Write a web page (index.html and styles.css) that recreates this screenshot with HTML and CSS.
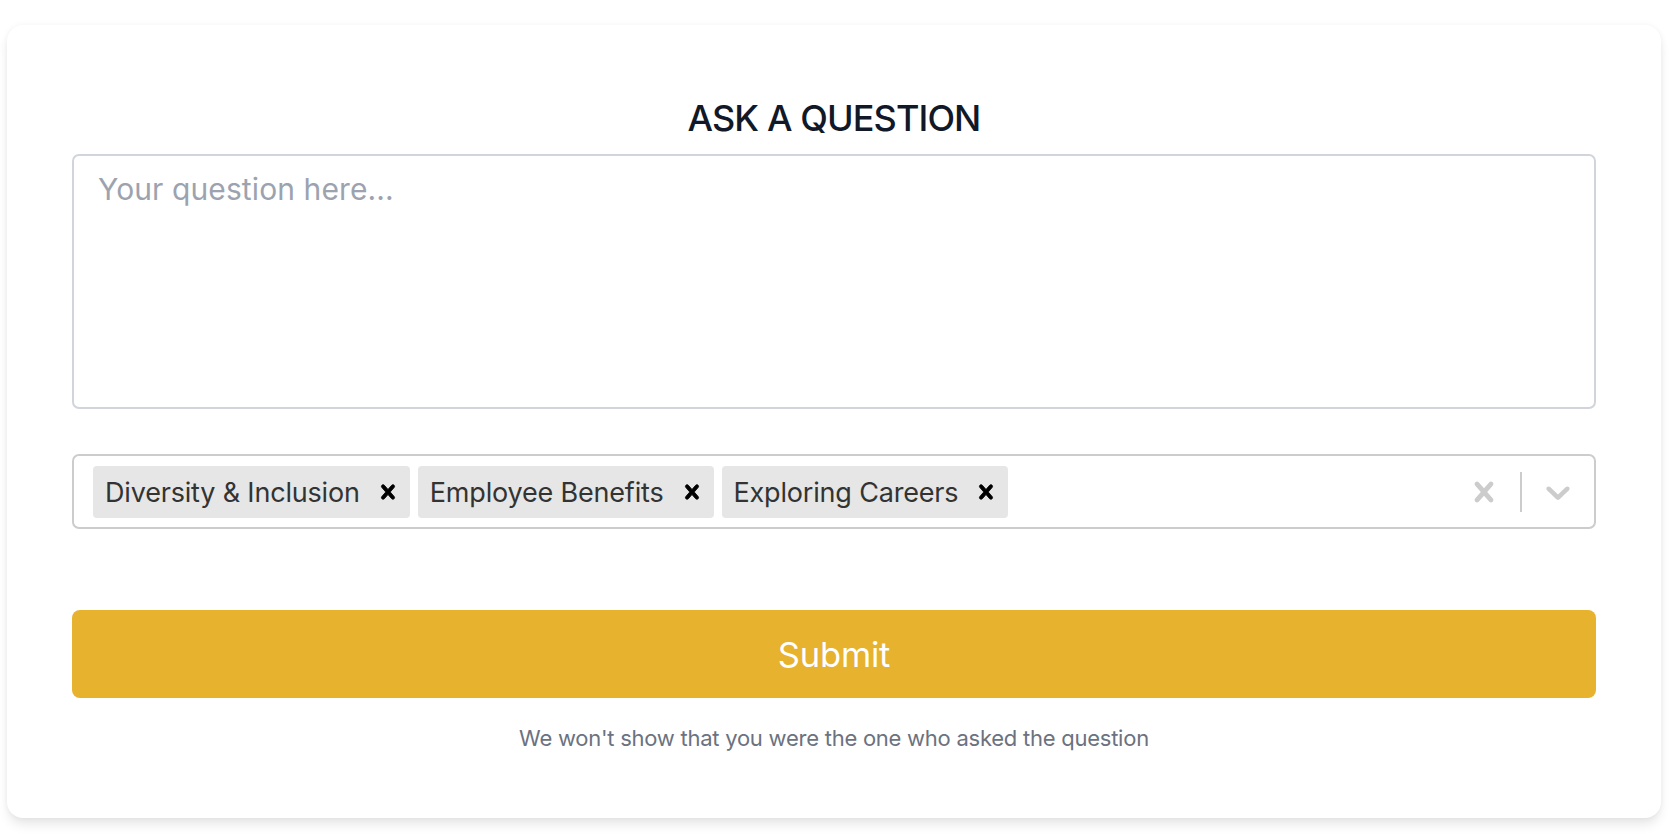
FILE: index.html
```html
<!DOCTYPE html>
<html lang="en">
<head>
<meta charset="utf-8">
<title>Ask a question</title>
<link rel="stylesheet" href="styles.css">
</head>
<body>
<main class="card">
  <h1 class="title">ASK A QUESTION</h1>
  <textarea class="question" placeholder="Your question here..."></textarea>
  <div class="select">
    <div class="values">
      <div class="chip"><span class="chip-label">Diversity &amp; Inclusion</span><span class="chip-remove"><svg viewBox="0 0 20 20" width="28" height="28"><path d="M14.348 14.849c-0.469 0.469-1.229 0.469-1.697 0l-2.651-3.030-2.651 3.029c-0.469 0.469-1.229 0.469-1.697 0-0.469-0.469-0.469-1.229 0-1.697l2.758-3.15-2.759-3.152c-0.469-0.469-0.469-1.228 0-1.697s1.228-0.469 1.697 0l2.652 3.031 2.651-3.031c0.469-0.469 1.228-0.469 1.697 0s0.469 1.229 0 1.697l-2.758 3.152 2.758 3.15c0.469 0.469 0.469 1.229 0 1.698z"/></svg></span></div>
      <div class="chip"><span class="chip-label">Employee Benefits</span><span class="chip-remove"><svg viewBox="0 0 20 20" width="28" height="28"><path d="M14.348 14.849c-0.469 0.469-1.229 0.469-1.697 0l-2.651-3.030-2.651 3.029c-0.469 0.469-1.229 0.469-1.697 0-0.469-0.469-0.469-1.229 0-1.697l2.758-3.15-2.759-3.152c-0.469-0.469-0.469-1.228 0-1.697s1.228-0.469 1.697 0l2.652 3.031 2.651-3.031c0.469-0.469 1.228-0.469 1.697 0s0.469 1.229 0 1.697l-2.758 3.152 2.758 3.15c0.469 0.469 0.469 1.229 0 1.698z"/></svg></span></div>
      <div class="chip"><span class="chip-label">Exploring Careers</span><span class="chip-remove"><svg viewBox="0 0 20 20" width="28" height="28"><path d="M14.348 14.849c-0.469 0.469-1.229 0.469-1.697 0l-2.651-3.030-2.651 3.029c-0.469 0.469-1.229 0.469-1.697 0-0.469-0.469-0.469-1.229 0-1.697l2.758-3.15-2.759-3.152c-0.469-0.469-0.469-1.228 0-1.697s1.228-0.469 1.697 0l2.652 3.031 2.651-3.031c0.469-0.469 1.228-0.469 1.697 0s0.469 1.229 0 1.697l-2.758 3.152 2.758 3.15c0.469 0.469 0.469 1.229 0 1.698z"/></svg></span></div>
    </div>
    <div class="indicators">
      <span class="indicator"><svg viewBox="0 0 20 20" width="40" height="40"><path d="M14.348 14.849c-0.469 0.469-1.229 0.469-1.697 0l-2.651-3.030-2.651 3.029c-0.469 0.469-1.229 0.469-1.697 0-0.469-0.469-0.469-1.229 0-1.697l2.758-3.15-2.759-3.152c-0.469-0.469-0.469-1.228 0-1.697s1.228-0.469 1.697 0l2.652 3.031 2.651-3.031c0.469-0.469 1.228-0.469 1.697 0s0.469 1.229 0 1.697l-2.758 3.152 2.758 3.15c0.469 0.469 0.469 1.229 0 1.698z"/></svg></span>
      <span class="separator"></span>
      <span class="indicator"><svg viewBox="0 0 20 20" width="40" height="40"><path d="M4.516 7.548c0.436-0.446 1.043-0.481 1.576 0l3.908 3.747 3.908-3.747c0.533-0.481 1.141-0.446 1.574 0 0.436 0.445 0.408 1.197 0 1.615-0.406 0.418-4.695 4.502-4.695 4.502-0.217 0.223-0.502 0.335-0.787 0.335s-0.57-0.112-0.789-0.335c0 0-4.287-4.084-4.695-4.502s-0.436-1.170 0-1.615z"/></svg></span>
    </div>
  </div>
  <button class="submit" type="button">Submit</button>
  <p class="note">We won't show that you were the one who asked the question</p>
</main>
</body>
</html>
```

FILE: styles.css
```css
* { box-sizing: border-box; }

html, body {
  margin: 0;
  background: #ffffff;
  font-family: Inter, "Noto Sans", sans-serif;
}

body {
  padding: 25px 17px 16px 7px;
}

.card {
  display: flex;
  flex-direction: column;
  height: 793px;
  padding: 71px 65px 0 65px;
  background: #ffffff;
  border-radius: 16px;
  box-shadow: 0 8px 12px -2px rgba(0, 0, 0, 0.10), 0 0 6px rgba(0, 0, 0, 0.05);
}

.title {
  margin: 0;
  font-size: 36px;
  line-height: 44px;
  font-weight: 500;
  color: #111827;
  text-align: center;
  letter-spacing: -0.9px;
}

.question {
  display: block;
  width: 100%;
  height: 255px;
  margin-top: 14px;
  padding: 13px 24px 11px;
  border: 2px solid #d1d5db;
  border-radius: 7px;
  font-family: inherit;
  font-size: 30px;
  line-height: 40px;
  color: #111827;
  resize: none;
  outline: none;
  letter-spacing: 0.1px;
}

.question::placeholder {
  color: #9ca3af;
}

.select {
  display: flex;
  align-items: stretch;
  height: 75px;
  margin-top: 45px;
  border: 2px solid #cccccc;
  border-radius: 7px;
}

.values {
  flex: 1;
  display: flex;
  align-items: center;
  gap: 8px;
  padding: 1px 16px 0 19px;
}

.chip {
  display: flex;
  align-items: stretch;
  height: 52px;
  background: #e6e6e6;
  border-radius: 4px;
}

.chip-label {
  display: flex;
  align-items: center;
  padding: 1px 6px 0 12px;
  font-size: 27px;
  color: #333333;
  letter-spacing: -0.18px;
}

.chip-remove {
  display: flex;
  align-items: center;
  padding: 0 8px;
  border-radius: 4px;
}

.chip-remove svg {
  fill: #000000;
  stroke: #000000;
  stroke-width: 0.6;
}

.indicators {
  display: flex;
  align-items: stretch;
}

.indicator {
  display: flex;
  align-items: center;
  padding: 0 16px;
}

.indicator svg {
  fill: #cccccc;
}

.separator {
  width: 2px;
  margin: 16px 0 15px;
  background: #cccccc;
}

.submit {
  display: block;
  width: 100%;
  height: 88px;
  margin-top: 81px;
  border: 0;
  border-radius: 8px;
  background: #e7b22d;
  color: #ffffff;
  font-family: inherit;
  font-size: 34.5px;
  font-weight: 400;
  letter-spacing: -0.2px;
}

.note {
  margin: 24px 0 0;
  font-size: 22px;
  line-height: 32px;
  color: #6b7280;
  text-align: center;
  letter-spacing: -0.25px;
}
```
